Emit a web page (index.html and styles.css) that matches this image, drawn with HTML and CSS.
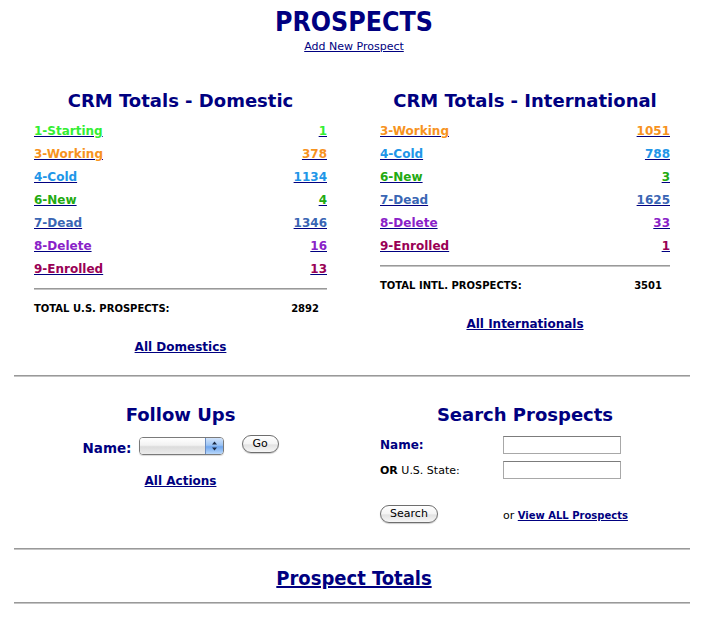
FILE: index.html
```html
<!DOCTYPE html>
<html>
<head>
<meta charset="utf-8">
<title>Prospects</title>
<link rel="stylesheet" href="styles.css">
</head>
<body>
<div class="page">
  <h1 class="title">PROSPECTS</h1>
  <div class="add"><a href="#" class="add-link">Add New Prospect</a></div>

  <div class="cols totals">
    <div class="col col-left">
      <h2 class="heading">CRM Totals - Domestic</h2>
      <div class="list">
        <div class="row"><a href="#" class="c1">1-Starting</a><a href="#" class="c1">1</a></div>
        <div class="row"><a href="#" class="c3">3-Working</a><a href="#" class="c3">378</a></div>
        <div class="row"><a href="#" class="c4">4-Cold</a><a href="#" class="c4">1134</a></div>
        <div class="row"><a href="#" class="c6">6-New</a><a href="#" class="c6">4</a></div>
        <div class="row"><a href="#" class="c7">7-Dead</a><a href="#" class="c7">1346</a></div>
        <div class="row"><a href="#" class="c8">8-Delete</a><a href="#" class="c8">16</a></div>
        <div class="row"><a href="#" class="c9">9-Enrolled</a><a href="#" class="c9">13</a></div>
        <div class="sep"></div>
        <div class="total"><span>TOTAL U.S. PROSPECTS:</span><span>2892</span></div>
      </div>
      <div class="all"><a href="#">All Domestics</a></div>
    </div>
    <div class="col col-right">
      <h2 class="heading">CRM Totals - International</h2>
      <div class="list list-right">
        <div class="row"><a href="#" class="c3">3-Working</a><a href="#" class="c3">1051</a></div>
        <div class="row"><a href="#" class="c4">4-Cold</a><a href="#" class="c4">788</a></div>
        <div class="row"><a href="#" class="c6">6-New</a><a href="#" class="c6">3</a></div>
        <div class="row"><a href="#" class="c7">7-Dead</a><a href="#" class="c7">1625</a></div>
        <div class="row"><a href="#" class="c8">8-Delete</a><a href="#" class="c8">33</a></div>
        <div class="row"><a href="#" class="c9">9-Enrolled</a><a href="#" class="c9">1</a></div>
        <div class="sep"></div>
        <div class="total"><span>TOTAL INTL. PROSPECTS:</span><span>3501</span></div>
      </div>
      <div class="all"><a href="#">All Internationals</a></div>
    </div>
  </div>

  <div class="rule rule-1"></div>

  <div class="cols tools">
    <div class="col col-left">
      <h2 class="heading">Follow Ups</h2>
      <div class="follow-row">
        <span class="fu-label">Name:</span>
        <span class="popup">
          <span class="popup-field"></span>
          <span class="popup-btn">
            <svg width="9" height="12" viewBox="0 0 9 12"><path d="M4.5 1.5 L7 4.5 L2 4.5 Z" fill="#1a2a44"/><path d="M4.5 10.5 L7 7.5 L2 7.5 Z" fill="#1a2a44"/></svg>
          </span>
        </span>
        <button class="btn btn-go">Go</button>
      </div>
      <div class="all all-actions"><a href="#">All Actions</a></div>
    </div>
    <div class="col col-right">
      <h2 class="heading">Search Prospects</h2>
      <div class="search">
        <div class="srow">
          <span class="slabel name-label">Name:</span>
          <input type="text" class="tinput">
        </div>
        <div class="srow">
          <span class="slabel state-label"><b>OR</b> U.S. State:</span>
          <input type="text" class="tinput">
        </div>
        <div class="brow">
          <span class="bcell"><button class="btn btn-search">Search</button></span>
          <span class="viewall">or <a href="#">View ALL Prospects</a></span>
        </div>
      </div>
    </div>
  </div>

  <div class="rule rule-2"></div>
  <div class="ptotals"><a href="#">Prospect Totals</a></div>
  <div class="rule rule-3"></div>
</div>
</body>
</html>
```

FILE: styles.css
```css
html, body {
  margin: 0;
  padding: 0;
  background: #ffffff;
}

body {
  font-family: "DejaVu Sans", Verdana, sans-serif;
  color: #000;
}

a {
  color: #000080;
  text-decoration: underline;
  text-decoration-color: #000080;
}

.page {
  width: 680px;
  margin-left: 14px;
  padding-top: 7px;
}

.title {
  margin: 0;
  font-family: "DejaVu Sans Condensed", "DejaVu Sans", sans-serif;
  font-weight: bold;
  font-size: 26.5px;
  line-height: 30px;
  color: #000080;
  text-align: center;
}

.add {
  margin-top: 3px;
  text-align: center;
  font-family: "DejaVu Sans", sans-serif;
  font-size: 11px;
  line-height: 13px;
}

.cols {
  width: 690px;
  display: flex;
  align-items: flex-start;
}

.col {
  flex-shrink: 0;
  display: flex;
  flex-direction: column;
  align-items: center;
}

.col-left { width: 333px; }
.col-right { width: 356px; }

.totals { margin-top: 37px; }

.heading {
  margin: 0;
  font-size: 18px;
  line-height: 22px;
  font-weight: bold;
  color: #000080;
  text-align: center;
}

.list {
  width: 293px;
  margin-top: 8px;
}

.list-right { width: 290px; }

.row {
  height: 23px;
  display: flex;
  justify-content: space-between;
  align-items: center;
  font-size: 12px;
  line-height: 23px;
  font-weight: bold;
}

.row a { line-height: 23px; }

.c1 { color: #33ee33; }
.c3 { color: #f7931e; }
.c4 { color: #2196e8; }
.c6 { color: #22aa11; }
.c7 { color: #3a66b4; }
.c8 { color: #8a22c8; }
.c9 { color: #990055; }

.sep {
  margin-top: 7px;
  height: 0;
  border-top: 1px solid #999;
  border-bottom: 1px solid #c4c4c4;
}

.total {
  margin-top: 13px;
  display: flex;
  justify-content: space-between;
  padding-right: 8px;
  font-size: 10px;
  line-height: 12px;
  font-weight: bold;
  color: #000;
}

.all {
  margin-top: 25px;
  font-size: 12px;
  line-height: 15px;
  font-weight: bold;
  text-align: center;
}

.rule {
  width: 676px;
  height: 0;
  border-top: 1px solid #999;
  border-bottom: 1px solid #c4c4c4;
}

.rule-1 { margin-top: 20px; }

.tools { margin-top: 27px; }

.follow-row {
  margin-top: 9px;
  height: 20px;
  display: flex;
  align-items: flex-start;
}

.fu-label {
  margin-top: 3px;
  font-size: 13.5px;
  line-height: 20px;
  font-weight: bold;
  color: #000080;
}

.popup {
  margin-top: 2px;
  margin-left: 7px;
  width: 85px;
  height: 18px;
  box-sizing: border-box;
  display: flex;
  border: 1px solid #7a7a7a;
  border-radius: 4px;
  overflow: hidden;
  box-shadow: 0 1px 1px rgba(0, 0, 0, 0.15);
}

.popup-field {
  flex: 1;
  background: linear-gradient(#ffffff, #f2f2f2 45%, #dcdcdc 55%, #ececec);
}

.popup-btn {
  width: 17px;
  display: flex;
  align-items: center;
  justify-content: center;
  border-left: 1px solid #6a8cc0;
  background: linear-gradient(#d2e4fb, #9cc4f4 45%, #6fa6ee 55%, #b9d8fb);
}

.btn {
  font-family: "DejaVu Sans", sans-serif;
  font-size: 11px;
  color: #000;
  height: 18px;
  padding: 0;
  box-sizing: border-box;
  border: 1px solid #6e6e6e;
  border-radius: 9px;
  background: linear-gradient(#ffffff, #f4f4f4 50%, #e2e2e2 55%, #f6f6f6);
  box-shadow: 0 1px 1px rgba(0, 0, 0, 0.2);
  line-height: 16px;
}

.btn-go {
  margin-left: 18px;
  width: 37px;
}

.all-actions { margin-top: 19px; }

.search {
  width: 290px;
  margin-top: 6px;
}

.srow {
  height: 25px;
  display: flex;
  align-items: center;
}

.slabel {
  width: 123px;
  flex-shrink: 0;
  line-height: 25px;
}

.name-label {
  padding-top: 1px;
  font-size: 12px;
  font-weight: bold;
  color: #000080;
}

.state-label {
  padding-top: 2px;
  font-size: 11px;
  color: #000;
}

.tinput {
  width: 118px;
  height: 18px;
  box-sizing: border-box;
  margin: 0;
  border: 1px solid #a8a8a8;
  border-top-color: #7c7c7c;
  background: #fff;
}

.brow {
  margin-top: 23px;
  height: 18px;
  display: flex;
  align-items: center;
}

.bcell {
  width: 123px;
  flex-shrink: 0;
  display: flex;
}

.btn-search {
  width: 58px;
}

.viewall {
  padding-top: 3px;
  font-size: 11px;
  color: #000;
}

.viewall a {
  font-size: 10px;
  font-weight: bold;
}

.rule-2 { margin-top: 25px; }

.ptotals {
  margin-top: 16px;
  text-align: center;
  font-family: "DejaVu Sans Condensed", "DejaVu Sans", sans-serif;
  font-size: 20px;
  line-height: 24px;
  font-weight: bold;
}

.rule-3 { margin-top: 12px; }
```
